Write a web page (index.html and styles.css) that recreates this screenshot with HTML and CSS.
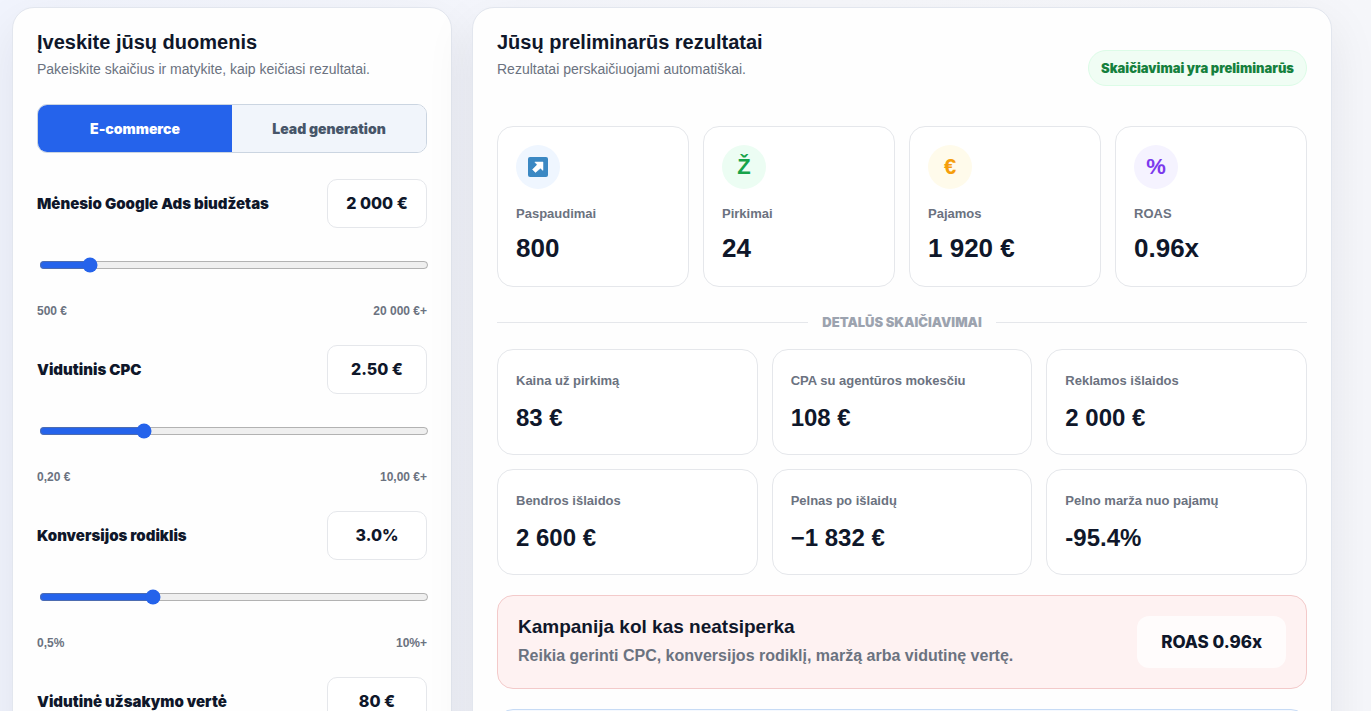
FILE: index.html
```html
<!DOCTYPE html>
<html lang="lt">
<head>
    <meta charset="UTF-8">
    <meta name="viewport" content="width=device-width, initial-scale=1.0">
    <title>Google Ads skaičiuoklė</title>
    <link rel="stylesheet" href="styles.css">
</head>
<body>
    <main class="calculator">
        <section class="panel">
            <h2>Įveskite jūsų duomenis</h2>
            <p class="subtitle">Pakeiskite skaičius ir matykite, kaip keičiasi rezultatai.</p>

            <div class="tabs">
                <button type="button" class="tab active">E-commerce</button>
                <button type="button" class="tab">Lead generation</button>
            </div>

            <div class="field">
                <div class="field-top">
                    <label for="budget">Mėnesio Google Ads biudžetas</label>
                    <output class="value-box" for="budget">2 000 €</output>
                </div>
                <input type="range" id="budget" min="0" max="1000" value="115">
                <div class="limits"><span>500 €</span><span>20 000 €+</span></div>
            </div>

            <div class="field">
                <div class="field-top">
                    <label for="cpc">Vidutinis CPC</label>
                    <output class="value-box" for="cpc">2.50 €</output>
                </div>
                <input type="range" id="cpc" min="0" max="1000" value="260">
                <div class="limits"><span>0,20 €</span><span>10,00 €+</span></div>
            </div>

            <div class="field">
                <div class="field-top">
                    <label for="rate">Konversijos rodiklis</label>
                    <output class="value-box" for="rate">3.0%</output>
                </div>
                <input type="range" id="rate" min="0" max="1000" value="284">
                <div class="limits"><span>0,5%</span><span>10%+</span></div>
            </div>

            <div class="field">
                <div class="field-top">
                    <label for="order">Vidutinė užsakymo vertė</label>
                    <output class="value-box" for="order">80 €</output>
                </div>
                <input type="range" id="order" min="0" max="1000" value="200">
            </div>
        </section>

        <section class="panel">
            <div class="results-head">
                <div>
                    <h2>Jūsų preliminarūs rezultatai</h2>
                    <p class="subtitle">Rezultatai perskaičiuojami automatiškai.</p>
                </div>
                <span class="badge">Skaičiavimai yra preliminarūs</span>
            </div>

            <div class="kpi-grid">
                <div class="card kpi">
                    <div class="icon blue">
                        <svg width="20" height="20" viewBox="0 0 20 20" aria-hidden="true">
                            <rect width="20" height="20" rx="2" fill="#3b88c3"/>
                            <path d="M6.8 5H15v8.4l-2.6-2.2-4.9 4.2-3-2.9 4.7-4.7z" fill="#fff" stroke="#fff" stroke-width="0.5" stroke-linejoin="round"/>
                        </svg>
                    </div>
                    <div class="label">Paspaudimai</div>
                    <div class="number">800</div>
                </div>
                <div class="card kpi">
                    <div class="icon green">Ž</div>
                    <div class="label">Pirkimai</div>
                    <div class="number">24</div>
                </div>
                <div class="card kpi">
                    <div class="icon yellow">€</div>
                    <div class="label">Pajamos</div>
                    <div class="number">1 920 €</div>
                </div>
                <div class="card kpi">
                    <div class="icon purple">%</div>
                    <div class="label">ROAS</div>
                    <div class="number">0.96x</div>
                </div>
            </div>

            <div class="divider">Detalūs skaičiavimai</div>

            <div class="detail-grid">
                <div class="card detail">
                    <div class="label">Kaina už pirkimą</div>
                    <div class="number">83 €</div>
                </div>
                <div class="card detail">
                    <div class="label">CPA su agentūros mokesčiu</div>
                    <div class="number">108 €</div>
                </div>
                <div class="card detail">
                    <div class="label">Reklamos išlaidos</div>
                    <div class="number">2 000 €</div>
                </div>
                <div class="card detail">
                    <div class="label">Bendros išlaidos</div>
                    <div class="number">2 600 €</div>
                </div>
                <div class="card detail">
                    <div class="label">Pelnas po išlaidų</div>
                    <div class="number">−1 832 €</div>
                </div>
                <div class="card detail">
                    <div class="label">Pelno marža nuo pajamų</div>
                    <div class="number">-95.4%</div>
                </div>
            </div>

            <div class="status">
                <div>
                    <h3>Kampanija kol kas neatsiperka</h3>
                    <p>Reikia gerinti CPC, konversijos rodiklį, maržą arba vidutinę vertę.</p>
                </div>
                <div class="status-value">ROAS 0.96x</div>
            </div>

            <div class="note"></div>
        </section>
    </main>
</body>
</html>
```

FILE: styles.css
```css
* {
    box-sizing: border-box;
}

body {
    margin: 0;
    height: 100vh;
    overflow: hidden;
    background: linear-gradient(90deg, #f1f4fd, #f6f7fb 60%, #f5f6fa);
    color: #0f172a;
    font-family: "Liberation Sans", Arial, sans-serif;
}

h2, h3, p {
    margin: 0;
}

.calculator {
    display: grid;
    grid-template-columns: 440px 1fr;
    gap: 20px;
    max-width: 1371px;
    padding: 7px 39px 40px 12px;
}

.panel {
    background: #fefefe;
    border: 1px solid #e2e6ee;
    border-radius: 22px;
    padding: 24px;
    box-shadow: 0 18px 50px rgba(15, 23, 42, 0.08);
}

h2 {
    font-size: 20px;
    line-height: 20px;
    margin-bottom: 7px;
}

.subtitle {
    color: #6b7280;
    font-size: 14px;
    line-height: 20px;
    margin-bottom: 25px;
}

.tabs {
    display: grid;
    grid-template-columns: 1fr 1fr;
    border: 1px solid #cbd5e1;
    border-radius: 10px;
    overflow: hidden;
    margin-bottom: 26px;
}

.tab {
    height: 47px;
    border: 0;
    background: #f1f5fb;
    color: #475569;
    font-family: Inter, sans-serif;
    font-size: 14px;
    font-weight: 900;
    cursor: pointer;
}

.tab.active {
    background: #2563eb;
    color: #fff;
}

.field {
    height: 166px;
}

.field-top {
    display: flex;
    justify-content: space-between;
    align-items: center;
}

.field label {
    font-family: Inter, sans-serif;
    font-size: 15px;
    font-weight: 900;
}

.value-box {
    width: 100px;
    border: 1px solid #e5e7eb;
    border-radius: 10px;
    background: #fff;
    font-family: Inter, sans-serif;
    font-size: 16px;
    font-weight: 800;
    line-height: 47px;
    text-align: center;
}

input[type="range"] {
    display: block;
    width: 100%;
    height: 16px;
    margin: 29px 0 30px 2px;
    accent-color: #2563eb;
}

.limits {
    display: flex;
    justify-content: space-between;
    color: #6b7280;
    font-size: 12px;
    font-weight: 700;
    line-height: 16px;
}

.results-head {
    display: flex;
    justify-content: space-between;
    align-items: center;
    margin-bottom: 22px;
}

.badge {
    border: 1px solid #dcfce7;
    border-radius: 999px;
    background: #f0fdf4;
    color: #15803d;
    font-family: Inter, sans-serif;
    font-size: 13px;
    font-weight: 900;
    line-height: 34px;
    padding: 0 12px;
}

.kpi-grid {
    display: grid;
    grid-template-columns: repeat(4, 1fr);
    gap: 14px;
}

.card {
    border: 1px solid #e5e7eb;
    border-radius: 16px;
    background: #fff;
    padding: 18px;
}

.label {
    color: #6b7280;
    font-size: 13px;
    font-weight: 700;
    line-height: 18px;
}

.number {
    font-weight: 700;
}

.kpi .number {
    font-size: 26px;
    line-height: 30px;
    margin: 10px 0 5px;
}

.detail {
    padding: 22px 18px;
}

.detail .number {
    font-size: 24px;
    line-height: 28px;
    margin: 14px 0 0;
}

.icon {
    display: flex;
    align-items: center;
    justify-content: center;
    width: 44px;
    height: 44px;
    border-radius: 50%;
    margin-bottom: 16px;
    font-size: 22px;
    font-weight: 700;
}

.blue {
    background: #eff6ff;
}

.green {
    background: #ecfdf3;
    color: #16a34a;
}

.yellow {
    background: #fffbeb;
    color: #f59e0b;
}

.purple {
    background: #f5f3ff;
    color: #7c3aed;
}

.divider {
    display: flex;
    align-items: center;
    gap: 14px;
    margin: 26px 0 18px;
    color: #9ca3af;
    font-family: Inter, sans-serif;
    font-size: 13px;
    font-weight: 900;
    line-height: 18px;
    text-transform: uppercase;
}

.divider::before,
.divider::after {
    content: "";
    flex: 1;
    height: 1px;
    background: #e5e7eb;
}

.detail-grid {
    display: grid;
    grid-template-columns: repeat(3, 1fr);
    gap: 14px;
}

.status {
    display: flex;
    justify-content: space-between;
    align-items: center;
    margin: 20px 0;
    padding: 20px;
    border: 1px solid #f3caca;
    border-radius: 16px;
    background: #fef2f2;
}

.status h3 {
    font-size: 19px;
    line-height: 22px;
    margin-bottom: 6px;
}

.status p {
    color: #6b7280;
    font-size: 16px;
    font-weight: 700;
    line-height: 24px;
}

.status-value {
    padding: 0 24px;
    border-radius: 12px;
    background: rgba(255, 255, 255, 0.75);
    font-family: Inter, sans-serif;
    font-size: 17px;
    font-weight: 800;
    line-height: 52px;
}

.note {
    height: 80px;
    border: 1px solid #c7dbf5;
    border-radius: 16px;
    background: #f5f9ff;
}
```
